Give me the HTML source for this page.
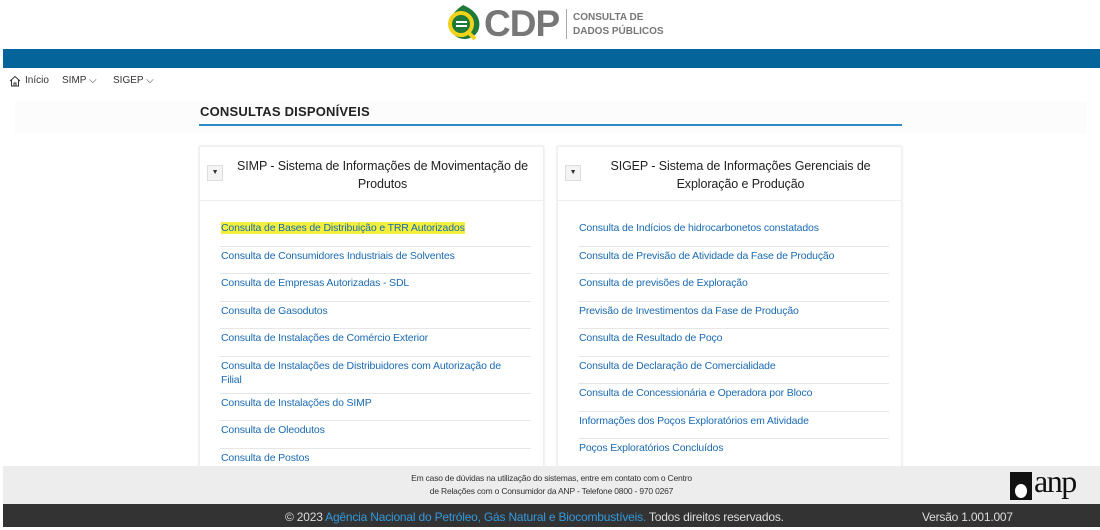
<!DOCTYPE html>
<html><head><meta charset="utf-8"><style>
*{margin:0;padding:0;box-sizing:border-box}
body{width:1100px;height:527px;overflow:hidden;background:#fff;font-family:"Liberation Sans",sans-serif;position:relative}
.abs{position:absolute}
.hdr{left:0;top:0;width:1100px;height:49px;background:#fff}
.bar{left:3px;top:49px;width:1097px;height:19px;background:#05659b}
.nav{top:75px;font-size:10px;color:#333}
.main{left:15px;top:101px;width:1072px;height:32px;background:#fcfcfc}
.title{left:200px;top:104px;font-size:13px;font-weight:bold;color:#222;letter-spacing:.2px}
.tline{left:199px;top:124px;width:703px;height:2px;background:#2e8bc7}
.card{top:146px;height:330px;background:#fff;border:1px solid #eee;box-shadow:0 0 2px #ddd}
.ch{position:absolute;left:0;top:0;width:100%;height:54px;border-bottom:1px solid #eee;text-align:center;font-size:12.5px;line-height:18px;color:#222;padding:10px 8px 0 30px;letter-spacing:-.1px}
.tog{position:absolute;left:7px;top:18px;width:16px;height:16px;border:1px solid #ddd;background:#f4f4f4;font-size:7px;line-height:14px;text-align:center;color:#333}
.items{position:absolute;left:20px;top:72px;right:12px}
.it{font-size:10.5px;color:#1a6ab3;border-bottom:1px solid #e6e6e6;padding:2px 0 6px 1px;line-height:14px;min-height:27.5px;letter-spacing:-.15px}
.foot1{left:3px;top:466px;width:1097px;height:38px;background:#ededed;text-align:center;font-size:8.5px;color:#333;line-height:13px;padding-top:6px;letter-spacing:-.2px}
.foot2{left:3px;top:504px;width:1097px;height:23px;background:#333;color:#ddd;font-size:12px;line-height:26px;letter-spacing:-.2px}
</style></head><body>
<div class="abs hdr"></div>
<svg class="abs" style="left:445px;top:4px" width="40" height="38" viewBox="0 0 40 38">
<path d="M18 1 C30 6 36 14 34 24 C32 33 22 37 14 34 C4 30 2 18 8 10 C11 6 15 3 18 1Z" fill="#1f7a3a"/>
<circle cx="16" cy="20" r="11" fill="none" stroke="#f3d21a" stroke-width="4"/>
<line x1="23" y1="28" x2="30" y2="35" stroke="#f3d21a" stroke-width="4"/>
<rect x="11" y="17" width="11" height="2" fill="#fff"/><rect x="11" y="21" width="11" height="2" fill="#fff"/>
</svg>
<div class="abs" style="left:484px;top:3px;font-size:37px;color:#777;font-weight:bold;letter-spacing:-1px">CDP</div>
<div class="abs" style="left:566px;top:9px;width:1px;height:30px;background:#aaa"></div>
<div class="abs" style="left:573px;top:11px;font-size:10px;color:#777;font-weight:bold;line-height:14px">CONSULTA DE<br>DADOS PÚBLICOS</div>
<div class="abs bar"></div>
<svg class="abs" style="left:9px;top:75px" width="12" height="12" viewBox="0 0 12 12"><path d="M1 6 L6 1.5 L11 6 M2.5 5 V11 H9.5 V5 M5 11 V8 H7 V11" fill="none" stroke="#333" stroke-width="1"/></svg>
<div class="abs nav" style="left:25px">Início</div>
<div class="abs nav" style="left:62px">SIMP ⌵</div>
<div class="abs nav" style="left:113px">SIGEP ⌵</div>
<div class="abs main"></div>
<div class="abs title">CONSULTAS DISPONÍVEIS</div>
<div class="abs tline"></div>
<div class="abs card" style="left:199px;width:345px">
<div class="ch"><span class="tog">▼</span>SIMP - Sistema de Informações de Movimentação de Produtos</div>
<div class="items">
<div class="it"><span style="background:#f2f03c">Consulta de Bases de Distribuição e TRR Autorizados</span></div>
<div class="it">Consulta de Consumidores Industriais de Solventes</div>
<div class="it">Consulta de Empresas Autorizadas - SDL</div>
<div class="it">Consulta de Gasodutos</div>
<div class="it">Consulta de Instalações de Comércio Exterior</div>
<div class="it" style="padding-right:20px">Consulta de Instalações de Distribuidores com Autorização de Filial</div>
<div class="it">Consulta de Instalações do SIMP</div>
<div class="it">Consulta de Oleodutos</div>
<div class="it">Consulta de Postos</div>
</div></div>
<div class="abs card" style="left:557px;width:345px">
<div class="ch"><span class="tog">▼</span>SIGEP - Sistema de Informações Gerenciais de Exploração e Produção</div>
<div class="items">
<div class="it">Consulta de Indícios de hidrocarbonetos constatados</div>
<div class="it">Consulta de Previsão de Atividade da Fase de Produção</div>
<div class="it">Consulta de previsões de Exploração</div>
<div class="it">Previsão de Investimentos da Fase de Produção</div>
<div class="it">Consulta de Resultado de Poço</div>
<div class="it">Consulta de Declaração de Comercialidade</div>
<div class="it">Consulta de Concessionária e Operadora por Bloco</div>
<div class="it">Informações dos Poços Exploratórios em Atividade</div>
<div class="it">Poços Exploratórios Concluídos</div>
</div></div>
<div class="abs foot1">Em caso de dúvidas na utilização do sistemas, entre em contato com o Centro<br>de Relações com o Consumidor da ANP - Telefone 0800 - 970 0267</div>
<div class="abs" style="left:1010px;top:472px;width:22px;height:28px;background:#111"></div>
<div class="abs" style="left:1015px;top:484px;width:12px;height:14px;background:#fff;border-radius:50%"></div>
<div class="abs" style="left:1034px;top:463px;font-family:'Liberation Serif',serif;font-size:32px;color:#111;letter-spacing:-1.5px">anp</div>
<div class="abs foot2"><span style="position:absolute;left:282px">© 2023 <span style="color:#3399dd">Agência Nacional do Petróleo, Gás Natural e Biocombustíveis.</span> Todos direitos reservados.</span><span style="position:absolute;left:919px">Versão 1.001.007</span></div>
</body></html>
